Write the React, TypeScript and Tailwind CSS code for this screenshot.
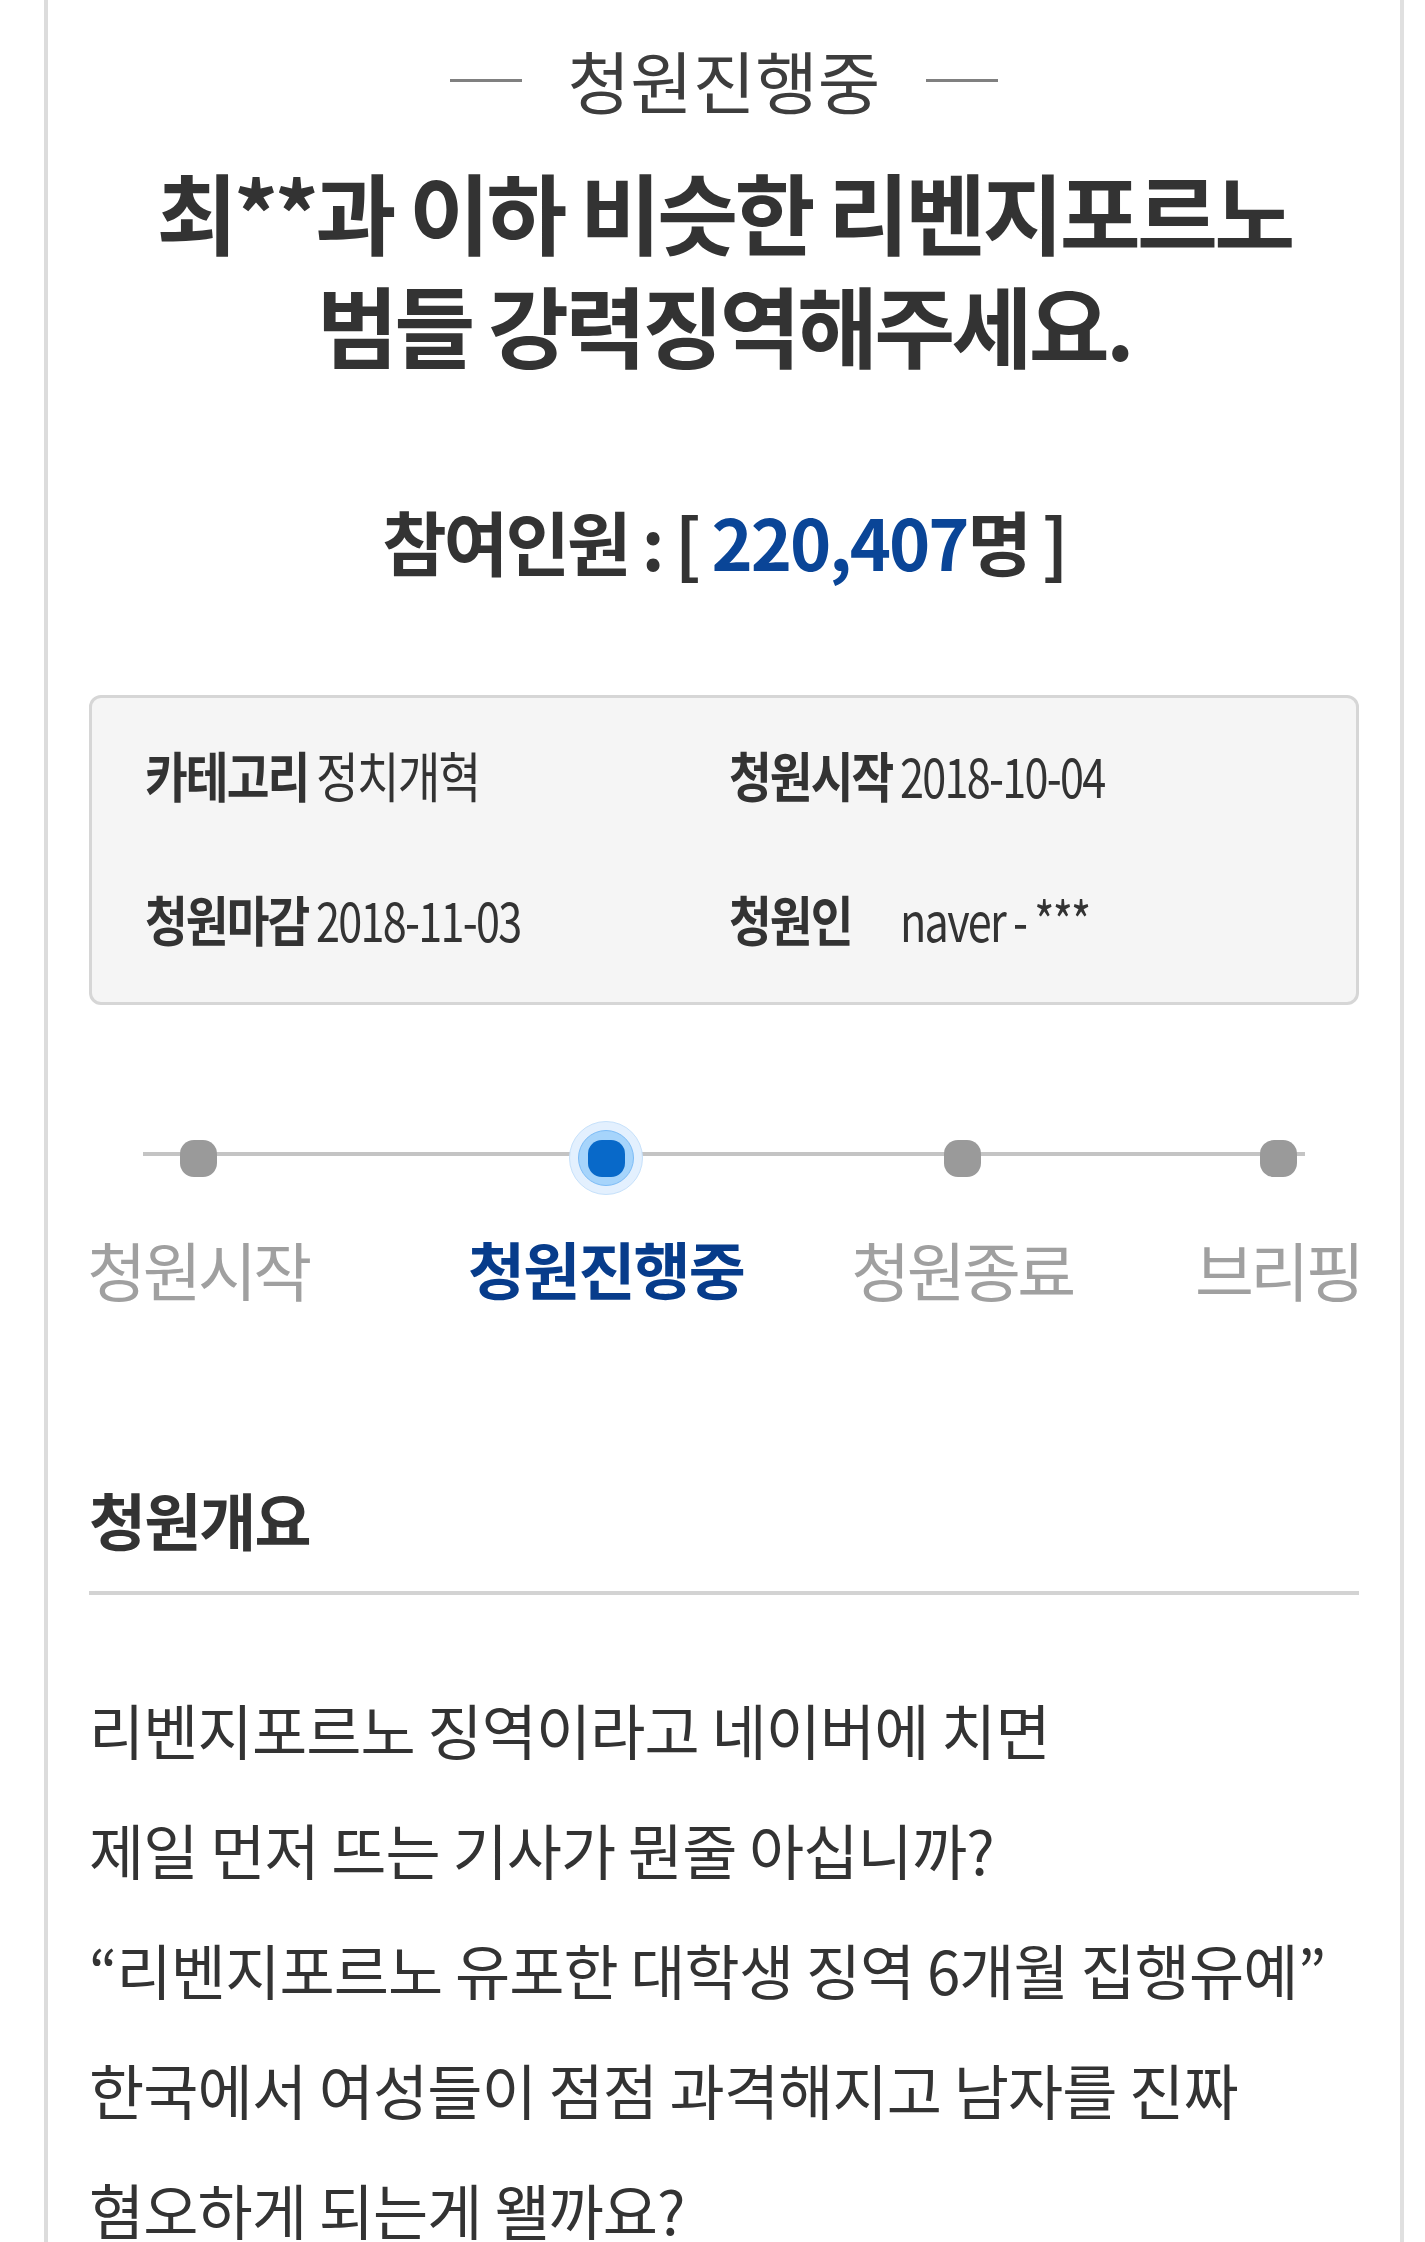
import React from 'react';

const steps = [
  { label: '청원시작', active: false, col: 'w-[218px]' },
  { label: '청원진행중', active: true, col: 'ml-[149px] w-[300px]' },
  { label: '청원종료', active: false, col: 'ml-[56px] w-[300px]' },
  { label: '브리핑', active: false, col: 'ml-[85px] w-[162px]' },
];

const bodyLines = [
  '리벤지포르노 징역이라고 네이버에 치면',
  '제일 먼저 뜨는 기사가 뭔줄 아십니까?',
  '“리벤지포르노 유포한 대학생 징역 6개월 집행유예”',
  '한국에서 여성들이 점점 과격해지고 남자를 진짜',
  '혐오하게 되는게 왤까요?',
];

function InfoCell({ label, value, hangul }: { label: string; value: string; hangul?: boolean }) {
  return (
    <div className="flex items-center whitespace-nowrap leading-[54px] text-[54px] tracking-[-0.04em]">
      <span className="inline-block w-[171px] shrink-0 origin-left scale-x-[0.86] font-bold text-[#333]">{label}</span>
      <span className={`inline-block origin-left text-[#333] ${hangul ? 'scale-x-[0.86]' : 'scale-x-[0.8]'}`}>
        {value}
      </span>
    </div>
  );
}

function Dot({ active }: { active: boolean }) {
  if (!active) {
    return <div className="h-[37px] w-[37px] rounded-[14px] bg-[#9a9a9a]" />;
  }
  return (
    <div className="flex h-[74px] w-[74px] items-center justify-center rounded-full border border-[#c6e1fb] bg-[#e3f0fe]">
      <div className="flex h-[56px] w-[56px] items-center justify-center rounded-full border border-[#7dbcf6] bg-[#a6d4fb]">
        <div className="h-[37px] w-[37px] rounded-[14px] bg-[#0869c9]" />
      </div>
    </div>
  );
}

export default function App() {
  return (
    <div className="min-h-[2242px] w-full overflow-hidden bg-white font-['Noto_Sans_CJK_KR','Noto_Sans_KR',sans-serif] text-[#333]">
      <div className="ml-[44px] min-h-[2242px] w-[1360px] border-l-4 border-r-4 border-l-[#dcdcdc] border-r-[#e0e0e0] px-[41px]">
        {/* status */}
        <div className="flex items-center justify-center pt-[46px]">
          <div className="h-[3px] w-[72px] bg-[#808080]" />
          <div className="mx-[46px] text-[68px] leading-[68px] text-[#3d3d3d]">청원진행중</div>
          <div className="h-[3px] w-[72px] bg-[#808080]" />
        </div>

        {/* title */}
        <h1 className="mt-[39px] text-center text-[88px] font-bold leading-[113px] tracking-[-0.042em] text-[#333]">
          최**과 이하 비슷한 리벤지포르노
          <br />
          범들 강력징역해주세요.
        </h1>

        {/* count */}
        <div className="mt-[128px] text-center text-[70px] font-bold leading-[68px] tracking-[-0.04em] text-[#333]">
          참여인원 : [ <span className="text-[70px] tracking-[-0.03em] text-[#0a4597]">220,407</span>명 ]
        </div>

        {/* info box */}
        <div className="mt-[120px] rounded-[12px] border-[3px] border-[#d6d6d6] bg-[#f5f5f5] pb-[56px] pl-[53px] pt-[50px]">
          <div className="grid grid-cols-[584px_1fr]">
            <InfoCell label="카테고리" value="정치개혁" hangul />
            <InfoCell label="청원시작" value="2018-10-04" />
          </div>
          <div className="mt-[90px] grid grid-cols-[584px_1fr]">
            <InfoCell label="청원마감" value="2018-11-03" />
            <InfoCell label="청원인" value="naver - ***" />
          </div>
        </div>

        {/* progress */}
        <div className="relative mt-[116px]">
          <div className="absolute left-[54px] top-[31px] h-[4px] w-[1162px] bg-[#c4c4c4]" />
          <div className="relative flex">
            {steps.map((s) => (
              <div key={s.label} className={`flex shrink-0 flex-col items-center ${s.col}`}>
                <div className="flex h-[74px] items-center justify-center">
                  <Dot active={s.active} />
                </div>
                <div
                  className={
                    s.active
                      ? 'mt-[42px] whitespace-nowrap text-[62px] font-bold leading-[62px] tracking-[-0.03em] text-[#073c8b]'
                      : 'mt-[42px] whitespace-nowrap text-[64px] leading-[62px] tracking-[-0.055em] text-[#a0a0a0]'
                  }
                >
                  {s.label}
                </div>
              </div>
            ))}
          </div>
        </div>

        {/* overview */}
        <h2 className="mt-[189px] text-[62px] font-bold leading-[62px] tracking-[-0.03em] text-[#333]">청원개요</h2>
        <div className="mt-[41px] h-[4px] bg-[#d3d3d3]" />

        <div className="mt-[74px] text-[60px] leading-[120px] tracking-[-0.015em] text-[#333]">
          {bodyLines.map((line) => (
            <div key={line} className="whitespace-nowrap">
              {line}
            </div>
          ))}
        </div>
      </div>
    </div>
  );
}
